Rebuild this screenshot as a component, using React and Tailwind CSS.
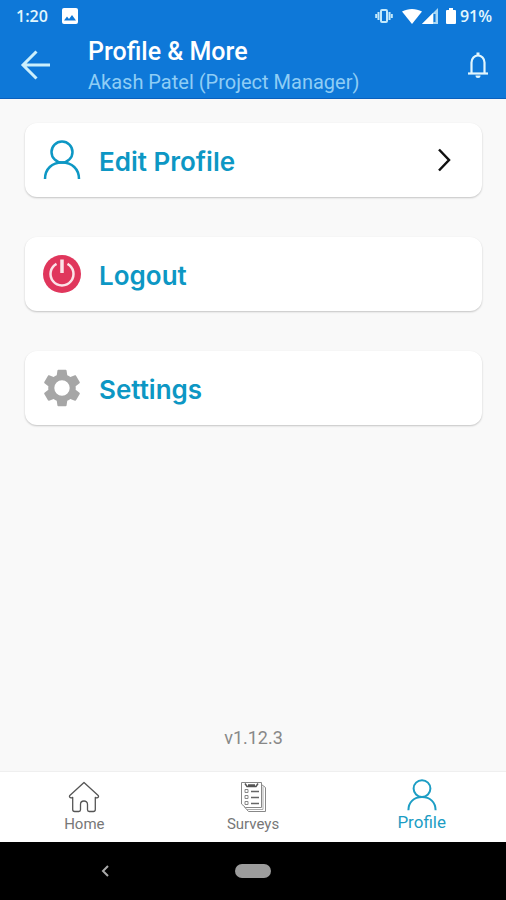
const PersonIcon = ({ className }) => (
  <svg className={className} viewBox="0 0 38 40" fill="none" stroke="currentColor" strokeWidth="2.5" aria-hidden="true">
    <circle cx="19" cy="12" r="10.5" />
    <path d="M2 39C2 29 9 22.500 19 22.500S36 29 36 39" />
  </svg>
);

const PowerIcon = () => (
  <svg className="size-9.5" viewBox="0 0 38 38" fill="none" aria-hidden="true">
    <circle cx="19" cy="19" r="19" fill="#e0365c" />
    <g stroke="#fbe3e8" strokeWidth="2.500">
      <path d="M13.500 8.800A11.500 11.500 0 1 0 24.500 8.800" />
      <path d="M19 4.500V18" strokeWidth="3.500" />
    </g>
  </svg>
);

const GearIcon = () => (
  <svg className="size-11" viewBox="0 0 24 24" fill="#a6a6a6" aria-hidden="true">
    <path d="M19.430 12.980c.04-.32.070-.64.070-.98s-.03-.66-.07-.98l2.110-1.650c.19-.15.240-.42.120-.64l-2-3.460c-.12-.22-.39-.3-.61-.22l-2.490 1c-.52-.4-1.080-.73-1.690-.98l-.38-2.650C14.460 2.180 14.250 2 14 2h-4c-.25 0-.46.180-.49.420l-.38 2.650c-.61.250-1.170.59-1.690.98l-2.490-1c-.23-.09-.49 0-.61.220l-2 3.460c-.13.220-.07.490.12.640l2.110 1.650c-.04.320-.07.650-.07.980s.03.660.070.980l-2.110 1.650c-.19.150-.24.420-.12.640l2 3.460c.12.220.39.300.61.220l2.490-1c.52.400 1.080.730 1.690.980l.38 2.650c.03.240.24.420.49.420h4c.25 0 .46-.18.490-.42l.38-2.650c.61-.25 1.170-.59 1.690-.98l2.490 1c.23.090.49 0 .61-.22l2-3.460c.12-.22.070-.49-.12-.64l-2.110-1.650zM12 16.200a4.200 4.200 0 1 1 0-8.400 4.200 4.200 0 0 1 0 8.400z" />
  </svg>
);

const HomeIcon = () => (
  <svg className="h-8 w-8" viewBox="0 0 32 32" fill="none" stroke="#555" strokeWidth="1.300" strokeLinejoin="round" aria-hidden="true">
    <path d="M16 1.500 1.800 14.500c-.9 1.100 0 2.500 1.700 2.300l1.200-.3V28.500c0 1.200.8 2 2 2h4.100c1 0 1.700-.7 1.700-1.700v-5.300c0-4.700 7-4.700 7 0v5.300c0 1 .7 1.700 1.700 1.700h4.100c1.200 0 2-.8 2-2V16.500l1.200.3c1.700.2 2.600-1.200 1.700-2.300z" />
  </svg>
);

const SurveyIcon = () => (
  <svg className="h-8 w-8" viewBox="0 0 32 32" fill="none" stroke="#888" strokeWidth="1" aria-hidden="true">
    <path d="M4.500 1.500h20v25h-16l-4-3.500z" />
    <path d="M24.500 3.500l4 3v24H11.500l-4-4.500" />
    <path d="M26 5.500v23H9.500" stroke="#aaa" />
    <path d="M8 2.500l2 3h9l2-3M11 4h7" stroke="#555" strokeWidth="1.500" />
    <path d="M8 8.500h3v3H8zM8 14.500h3v3H8zM8 20.500h3v3H8z" />
    <path d="M14 10.500h8M14 16.500h8M14 22.500h8" stroke="#666" strokeWidth="1.500" />
  </svg>
);

const StatusBar = () => (
  <div className="flex h-8 items-center pr-3.5 pl-4 font-['Open_Sans',sans-serif] text-base font-semibold">
    <span className="text-[#e2f6fd]">1:20</span>
    <svg className="ml-3.5 size-4" viewBox="0 0 16 16" aria-hidden="true">
      <rect width="16" height="16" rx="2" fill="white" />
      <path d="M2 12.500 5 8.500l2 2.500 3-4 4 5.500z" fill="#0e78d8" />
    </svg>
    <svg className="ml-auto h-4 w-5" viewBox="0 0 20 16" fill="none" stroke="#c3e9fb" strokeWidth="2" aria-hidden="true">
      <rect x="7" y="2" width="6" height="12" rx="1" />
      <path d="M4.500 4v8M15.500 4v8" />
      <path d="M2.200 6v4M17.800 6v4" />
    </svg>
    <svg className="ml-2 h-4 w-5" viewBox="0 0 20 16" fill="white" aria-hidden="true">
      <path d="M0 3.500C6 0 14 0 20 3.500L10 16z" />
    </svg>
    <svg className="h-4 w-4" viewBox="0 0 16 16" aria-hidden="true">
      <path d="M0 16 16 0v16z" fill="#a9d8f5" />
      <path d="M0 16 11 5v11z" fill="white" />
      <path d="M12.500 6v8" stroke="#0e78d8" strokeWidth="2" />
    </svg>
    <svg className="ml-2 h-4 w-2.5" viewBox="0 0 10 16" fill="white" aria-hidden="true">
      <path d="M3 0h4v2h2a1 1 0 0 1 1 1v12a1 1 0 0 1-1 1H1a1 1 0 0 1-1-1V3a1 1 0 0 1 1-1h2z" />
    </svg>
    <span className="ml-1 text-[#e2f6fd]">91%</span>
  </div>
);

const Header = () => (
  <header className="border-b border-[#0a60bd] bg-[#0e78d8] text-white">
    <StatusBar />
    <div className="flex h-16.5 items-center pr-4">
      <button type="button" aria-label="Back" className="ml-5 text-[#cceffc]">
        <svg className="size-8" viewBox="0 0 32 32" fill="none" stroke="currentColor" strokeWidth="3" aria-hidden="true">
          <path d="M30 16H3M16.500 2.500 3 16l13.500 13.500" />
        </svg>
      </button>
      <div className="ml-9 flex-1 pt-1.5">
        <h1 className="text-[25px] leading-7 font-medium">Profile &amp; More</h1>
        <p className="text-xl leading-8 text-[#8fcdf5]">Akash Patel (Project Manager)</p>
      </div>
      <button type="button" aria-label="Notifications" className="text-[#e2f6fd]">
        <svg className="h-6.5 w-6" viewBox="0 0 24 26" fill="none" stroke="currentColor" strokeWidth="2.200" aria-hidden="true">
          <path d="M5.500 21V10.500a6.500 7 0 0 1 13 0V21" />
          <path d="M2 21.500h20" />
          <path d="M12 .5V4" strokeWidth="3" />
          <path d="M9.500 23.500h5a2.500 2.500 0 0 1-5 0z" fill="currentColor" stroke="none" />
        </svg>
      </button>
    </div>
  </header>
);

const MenuCard = ({ icon, label, chevron }) => (
  <button
    type="button"
    className="flex h-18.5 w-full items-center rounded-xl bg-white pr-7.5 pl-3.5 text-left shadow-[0_1px_2px_rgba(0,0,0,0.22)]"
  >
    <span className="flex w-11.5 justify-center">{icon}</span>
    <span className="ml-3.5 pt-0.5 font-['Inter',sans-serif] text-[26px] font-semibold text-[#0d97c4]">{label}</span>
    {chevron && (
      <svg className="ml-auto h-6 w-4" viewBox="0 0 16 24" fill="none" stroke="#111" strokeWidth="2.500" aria-hidden="true">
        <path d="M3 1.500 13 12 3 22.500" />
      </svg>
    )}
  </button>
);

const NavItem = ({ icon, label, active }) => (
  <a
    href="#"
    className={`flex flex-1 flex-col items-center leading-5 ${
      active ? "pt-1.5 text-[17px] text-[#1c9dc4]" : "pt-2 text-[15px] text-[#777]"
    }`}
  >
    <span className="flex h-8.5 items-center">{icon}</span>
    <span>{label}</span>
  </a>
);

const App = () => {
  return (
    <div className="flex min-h-screen flex-col bg-[#f9f9f9] font-['Roboto',sans-serif]">
      <Header />
      <main className="flex flex-1 flex-col pt-6 pr-6 pl-[25px]">
        <div className="flex flex-col gap-10">
          <MenuCard icon={<PersonIcon className="h-10 w-9.5 text-[#0d97c4]" />} label="Edit Profile" chevron />
          <MenuCard icon={<PowerIcon />} label="Logout" />
          <MenuCard icon={<GearIcon />} label="Settings" />
        </div>
        <p className="mt-auto pb-5 text-center text-lg text-[#888]">v1.12.3</p>
      </main>
      <nav className="flex h-17.5 bg-white shadow-[0_-1px_1px_rgba(0,0,0,0.04)]">
        <NavItem icon={<HomeIcon />} label="Home" />
        <NavItem icon={<SurveyIcon />} label="Surveys" />
        <NavItem icon={<PersonIcon className="h-8 w-8" />} label="Profile" active />
      </nav>
      <div className="grid h-14.5 grid-cols-5 items-center justify-items-center bg-black">
        <span />
        <button type="button" aria-label="System back" className="justify-self-start">
          <svg className="h-3 w-2" viewBox="0 0 8 12" fill="none" stroke="#aaa" strokeWidth="2" aria-hidden="true">
            <path d="M7 1 2 6l5 5" />
          </svg>
        </button>
        <button type="button" aria-label="System home" className="h-3.5 w-9 rounded-full bg-[#9c9c9c]" />
      </div>
    </div>
  );
};

export default App;
